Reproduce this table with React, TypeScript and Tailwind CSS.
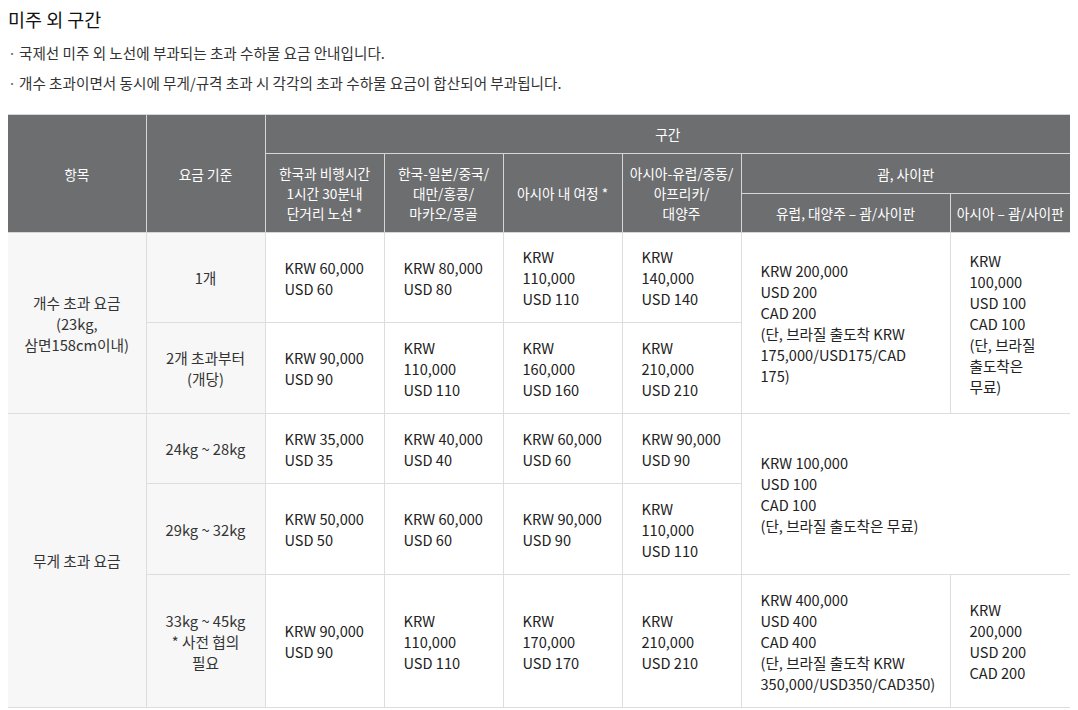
import React from 'react';

const font = { fontFamily: '"Noto Sans CJK KR", "Noto Sans", sans-serif' };

const th = 'bg-[#6d6e70] text-white font-normal text-[13.7px] leading-[20px] text-center align-middle border border-[#d6d6d6] px-1 py-0';
const label = 'bg-[#f7f7f7] text-center align-middle border border-[#dddddd] text-[14.7px] leading-[21px] text-[#333] px-1 py-0';
const td = 'bg-white text-left align-middle border border-[#dddddd] text-[14.6px] leading-[21px] text-[#222] pl-[19px] pr-2 py-0 whitespace-nowrap';

const Lines: React.FC<{ lines: string[] }> = ({ lines }) => (
  <>
    {lines.map((l, i) => (
      <React.Fragment key={i}>
        {i > 0 && <br />}
        {l}
      </React.Fragment>
    ))}
  </>
);

const Cell: React.FC<{ lines: string[]; rowSpan?: number; colSpan?: number; last?: boolean }> = ({
  lines,
  rowSpan,
  colSpan,
  last,
}) => (
  <td rowSpan={rowSpan} colSpan={colSpan} className={`${td} ${last ? 'border-r-0' : ''}`}>
    <Lines lines={lines} />
  </td>
);

export default function App() {
  return (
    <div className="bg-white px-2 pt-[4px] pb-4 text-[#222]" style={font}>
      <h2 className="text-[18.5px] leading-[30px] font-normal text-[#111]">미주 외 구간</h2>
      <ul className="mt-[4px] text-[14.6px] leading-[30px] text-[#333]">
        <li className="flex">
          <span className="w-[11px] shrink-0 text-[#666]">·</span>
          <span>국제선 미주 외 노선에 부과되는 초과 수하물 요금 안내입니다.</span>
        </li>
        <li className="flex">
          <span className="w-[11px] shrink-0 text-[#666]">·</span>
          <span>개수 초과이면서 동시에 무게/규격 초과 시 각각의 초과 수하물 요금이 합산되어 부과됩니다.</span>
        </li>
      </ul>

      <table className="mt-[16px] w-full table-fixed border-collapse border-t border-t-[#9a9a9a]">
        <colgroup>
          <col className="w-[138px]" />
          <col className="w-[119px]" />
          <col className="w-[119px]" />
          <col className="w-[119px]" />
          <col className="w-[119px]" />
          <col className="w-[119px]" />
          <col className="w-[209px]" />
          <col className="w-[120px]" />
        </colgroup>
        <thead>
          <tr className="h-[39px]">
            <th rowSpan={3} className={`${th} border-l-0`}>항목</th>
            <th rowSpan={3} className={th}>요금 기준</th>
            <th colSpan={6} className={`${th} border-r-0`}>구간</th>
          </tr>
          <tr className="h-[40px]">
            <th rowSpan={2} className={th}>
              <Lines lines={['한국과 비행시간', '1시간 30분내', '단거리 노선 *']} />
            </th>
            <th rowSpan={2} className={th}>
              <Lines lines={['한국-일본/중국/', '대만/홍콩/', '마카오/몽골']} />
            </th>
            <th rowSpan={2} className={th}>아시아 내 여정 *</th>
            <th rowSpan={2} className={th}>
              <Lines lines={['아시아-유럽/중동/', '아프리카/', '대양주']} />
            </th>
            <th colSpan={2} className={`${th} border-r-0`}>괌, 사이판</th>
          </tr>
          <tr className="h-[39px]">
            <th className={th}>유럽, 대양주 – 괌/사이판</th>
            <th className={`${th} border-r-0`}>아시아 – 괌/사이판</th>
          </tr>
        </thead>
        <tbody>
          <tr className="h-[90px]">
            <td rowSpan={2} className={`${label} border-l-0`}>
              <Lines lines={['개수 초과 요금', '(23kg,', '삼면158cm이내)']} />
            </td>
            <td className={label}>1개</td>
            <Cell lines={['KRW 60,000', 'USD 60']} />
            <Cell lines={['KRW 80,000', 'USD 80']} />
            <Cell lines={['KRW', '110,000', 'USD 110']} />
            <Cell lines={['KRW', '140,000', 'USD 140']} />
            <Cell
              rowSpan={2}
              lines={['KRW 200,000', 'USD 200', 'CAD 200', '(단, 브라질 출도착 KRW', '175,000/USD175/CAD', '175)']}
            />
            <Cell
              rowSpan={2}
              last
              lines={['KRW', '100,000', 'USD 100', 'CAD 100', '(단, 브라질', '출도착은', '무료)']}
            />
          </tr>
          <tr className="h-[91px]">
            <td className={label}>
              <Lines lines={['2개 초과부터', '(개당)']} />
            </td>
            <Cell lines={['KRW 90,000', 'USD 90']} />
            <Cell lines={['KRW', '110,000', 'USD 110']} />
            <Cell lines={['KRW', '160,000', 'USD 160']} />
            <Cell lines={['KRW', '210,000', 'USD 210']} />
          </tr>
          <tr className="h-[70px]">
            <td rowSpan={3} className={`${label} border-l-0`}>무게 초과 요금</td>
            <td className={label}>24kg ~ 28kg</td>
            <Cell lines={['KRW 35,000', 'USD 35']} />
            <Cell lines={['KRW 40,000', 'USD 40']} />
            <Cell lines={['KRW 60,000', 'USD 60']} />
            <Cell lines={['KRW 90,000', 'USD 90']} />
            <Cell
              rowSpan={2}
              colSpan={2}
              last
              lines={['KRW 100,000', 'USD 100', 'CAD 100', '(단, 브라질 출도착은 무료)']}
            />
          </tr>
          <tr className="h-[91px]">
            <td className={label}>29kg ~ 32kg</td>
            <Cell lines={['KRW 50,000', 'USD 50']} />
            <Cell lines={['KRW 60,000', 'USD 60']} />
            <Cell lines={['KRW 90,000', 'USD 90']} />
            <Cell lines={['KRW', '110,000', 'USD 110']} />
          </tr>
          <tr className="h-[133px]">
            <td className={label}>
              <Lines lines={['33kg ~ 45kg', '* 사전 협의', '필요']} />
            </td>
            <Cell lines={['KRW 90,000', 'USD 90']} />
            <Cell lines={['KRW', '110,000', 'USD 110']} />
            <Cell lines={['KRW', '170,000', 'USD 170']} />
            <Cell lines={['KRW', '210,000', 'USD 210']} />
            <Cell
              lines={['KRW 400,000', 'USD 400', 'CAD 400', '(단, 브라질 출도착 KRW', '350,000/USD350/CAD350)']}
            />
            <Cell last lines={['KRW', '200,000', 'USD 200', 'CAD 200']} />
          </tr>
        </tbody>
      </table>
    </div>
  );
}
